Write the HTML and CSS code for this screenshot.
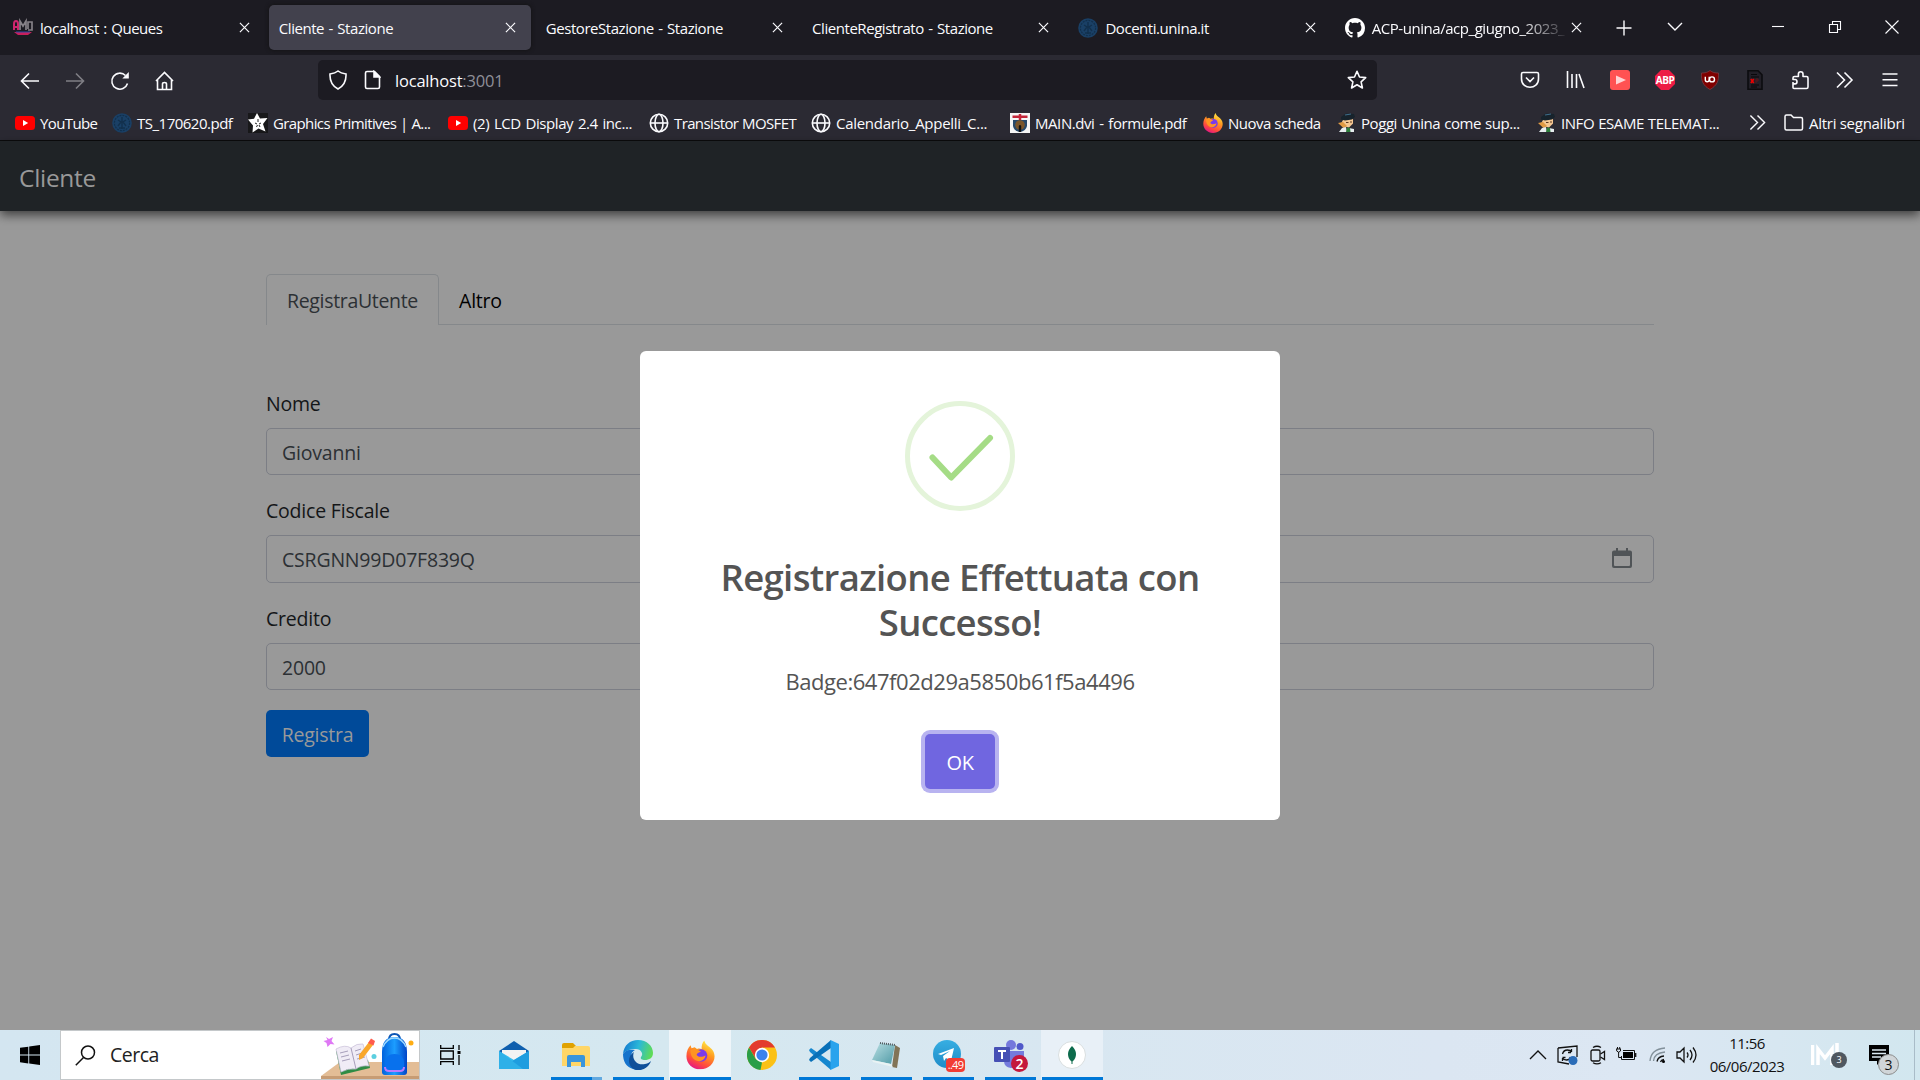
FILE: index.html
```
<!DOCTYPE html>
<html lang="it">
<head>
<meta charset="utf-8">
<title>Cliente - Stazione</title>
<link rel="stylesheet" href="styles.css">
</head>
<body>
<svg class="defs" width="0" height="0" aria-hidden="true">
  <defs>
    <linearGradient id="flame" x1="0.8" y1="0" x2="0.3" y2="1"><stop offset="0" stop-color="#fff44f"/><stop offset=".4" stop-color="#ff9a1f"/><stop offset=".75" stop-color="#ff4b3e"/><stop offset="1" stop-color="#e31587"/></linearGradient>
    <linearGradient id="edgeTop" x1="0" y1="0.3" x2="1" y2="0.5"><stop offset="0" stop-color="#1479d0"/><stop offset=".5" stop-color="#2ab8d8"/><stop offset="1" stop-color="#5fdc55"/></linearGradient>
    <linearGradient id="pack" x1="0" y1="0" x2="1" y2="0"><stop offset="0" stop-color="#0062dd"/><stop offset=".5" stop-color="#1c9dff"/><stop offset="1" stop-color="#0045c8"/></linearGradient>
    <linearGradient id="tg" x1="0" y1="0" x2="0" y2="1"><stop offset="0" stop-color="#37aee2"/><stop offset="1" stop-color="#1e8cc8"/></linearGradient>
    <linearGradient id="pad" x1="0" y1="0" x2="1" y2="1"><stop offset="0" stop-color="#b9dfe3"/><stop offset="1" stop-color="#4f9aa6"/></linearGradient>
  </defs>
  <symbol id="close" viewBox="0 0 12 12"><path d="M1 1l10 10M11 1L1 11" fill="none" stroke="currentColor" stroke-width="1.3"/></symbol>
  <symbol id="youtube" viewBox="0 0 20 20"><rect y="3" width="20" height="14" rx="3.5" fill="#f00"/><path d="M8 7l5.2 3L8 13z" fill="#fff"/></symbol>
  <symbol id="unina" viewBox="0 0 20 20"><circle cx="10" cy="10" r="9.8" fill="#1a4066"/><circle cx="10" cy="10" r="7.6" fill="none" stroke="#12304d" stroke-width="1.2" stroke-dasharray="2 1"/><path d="M10 4v12M6 7l3 2-3 4M14 7l-3 2 3 4M7 15h6" fill="none" stroke="#12304d" stroke-width="1.4"/></symbol>
  <symbol id="globe" viewBox="0 0 20 20"><g fill="none" stroke="#fbfbfe" stroke-width="1.6"><circle cx="10" cy="10" r="8.7"/><ellipse cx="10" cy="10" rx="4" ry="8.7"/><path d="M1.5 10h17"/></g></symbol>
  <symbol id="firefox" viewBox="0 0 20 20"><path d="M12.6 0c.5 2 1.3 2.6 2.6 3.8 2.8 2 4.5 4 4.5 7.1 0 5-4.200 9-9.700 9S.3 16 .3 10.800C.3 7.500 1.500 5 3.200 3.300l.6 2.100L6 4.700l1.600 1.100c1.300-.4 2.300-.3 3.200.2C10.600 3.600 11.300 1.500 12.600 0z" fill="url(#flame)"/><circle cx="10.400" cy="10.400" r="4.300" fill="#7a3bea"/><path d="M3 6.500c2.500-.8 5-.4 7.300 1.200-1.500.4-2.800 1-3 2.300 1.500 2 4.400 1.200 6.200.3-.6 3.700-4.600 4.900-7.300 3.200C4 12.100 2.900 9.300 3 6.500z" fill="#ff9422"/></symbol>
  <symbol id="student" viewBox="0 0 20 20"><path d="M6 7l10-1.500v5l-4 4-5-1-3-3z" fill="#f5c792"/><path d="M4 4l5-3.500L17 1l1 3-3 2.500-7 1-4-1z" fill="#17232c"/><path d="M8 2l6-1" stroke="#3f6f8c"/><path d="M1 10l5-1 4 4-3 2.500z" fill="#e09a45"/><path d="M2 19l3-4 4-1 1 5z" fill="#e8eef0"/><path d="M12 15l5 1v3h-4z" fill="#e8eef0"/><path d="M10 14.500l3 .5.5 4H9z" fill="#2d7f3b"/><path d="M9 9.500h2.500M13 9h2" stroke="#5a3820"/></symbol>
  <symbol id="more" viewBox="0 0 18 18"><path d="M1.500 1.500L9 9l-7.500 7.500M9 1.500L16.500 9 9 16.500" fill="none" stroke="#fbfbfe" stroke-width="1.500"/></symbol>
</svg>

<header class="tabs">
  <div class="tab">
    <svg class="fav" viewBox="0 0 20 20"><path d="M1 14h18l-4 3H5z" fill="#c81f5c"/><path d="M1 12V6q0-3 2-3t2 3v6M1 9h4" fill="none" stroke="#d0266e" stroke-width="2"/><path d="M7 12V3l3 5 3-5v9M15 11V4h4v8h-4" fill="none" stroke="#858187" stroke-width="1.700"/><path d="M3 14h14" stroke="#2e4aa7"/></svg>
    <span class="title">localhost : Queues</span><svg class="x"><use href="#close"/></svg>
  </div>
  <div class="tab active"><span class="title">Cliente - Stazione</span><svg class="x"><use href="#close"/></svg></div>
  <div class="tab"><span class="title">GestoreStazione - Stazione</span><svg class="x"><use href="#close"/></svg></div>
  <div class="tab"><span class="title">ClienteRegistrato - Stazione</span><svg class="x"><use href="#close"/></svg></div>
  <div class="tab"><svg class="fav"><use href="#unina"/></svg><span class="title">Docenti.unina.it</span><svg class="x"><use href="#close"/></svg></div>
  <div class="tab"><svg class="fav" viewBox="0 0 16 16"><path fill="#fff" d="M8 0C3.580 0 0 3.580 0 8c0 3.540 2.290 6.530 5.470 7.590.4.070.55-.17.55-.38 0-.19-.01-.82-.01-1.490-2.010.37-2.530-.49-2.690-.94-.09-.23-.48-.94-.82-1.130-.28-.15-.68-.52-.01-.53.63-.01 1.080.58 1.230.82.72 1.210 1.870.87 2.330.66.07-.52.28-.87.51-1.070-1.780-.2-3.640-.89-3.640-3.950 0-.87.31-1.590.82-2.150-.08-.2-.36-1.020.08-2.120 0 0 .67-.21 2.200.82.640-.18 1.320-.27 2-.27s1.360.09 2 .27c1.530-1.040 2.200-.82 2.200-.82.440 1.100.16 1.920.08 2.120.51.56.82 1.270.82 2.150 0 3.070-1.870 3.750-3.650 3.950.29.25.54.73.54 1.480 0 1.070-.01 1.930-.01 2.200 0 .21.15.46.55.38A8.010 8.010 0 0 0 16 8c0-4.420-3.580-8-8-8z"/></svg><span class="title fade">ACP-unina/acp_giugno_2023_</span><svg class="x"><use href="#close"/></svg></div>
  <div class="tabtools">
    <svg width="16" height="16" viewBox="0 0 16 16"><path d="M8 .5v15M.5 8h15"/></svg>
    <svg width="16" height="16" viewBox="0 0 16 16"><path d="M1 4l7 7 7-7"/></svg>
  </div>
  <div class="wincontrols">
    <svg width="14" height="14" viewBox="0 0 14 14"><path d="M1 6.500h12"/></svg>
    <svg width="14" height="14" viewBox="0 0 14 14"><path d="M1.500 4.500h8v8h-8zM4.500 4V1.500h8v8H10"/></svg>
    <svg width="14" height="14" viewBox="0 0 14 14"><path d="M.5 .5l13 13M13.500 .5l-13 13"/></svg>
  </div>
</header>

<div class="toolbar">
  <div class="nav">
    <svg viewBox="0 0 20 20"><path d="M19 10H2M9 2.500L1.500 10 9 17.500"/></svg>
    <svg class="dim" viewBox="0 0 20 20"><path d="M1 10h17M11 2.500l7.500 7.500-7.500 7.500"/></svg>
    <svg viewBox="0 0 20 20"><path d="M17.500 12.500A8 8 0 1 1 15.500 4.500"/><path d="M18.800 1v6.500h-6.500z" fill="#fbfbfe" stroke="none"/></svg>
    <svg viewBox="0 0 20 20"><path d="M1 10l8.500-8.500L18 10M2.500 8.500v10h14v-10M7.500 18v-5q0-1.500 2-1.500t2 1.500v5"/></svg>
  </div>
  <div class="urlbar">
    <svg width="20" height="20" viewBox="0 0 20 20"><path d="M10 1c2.500 2 5 2.500 8 3 .3 6-1.500 11.500-8 15C3.500 15.500 1.700 10 2 4c3-.5 5.500-1 8-3z"/></svg>
    <svg class="doc" width="17" height="20" viewBox="0 0 17 20"><path d="M3 1.500h7.500l5 5V17q0 1.500-1.500 1.500H3Q1.500 18.500 1.500 17V3Q1.500 1.500 3 1.500z"/><path d="M10 1.500v5.500h5.500z" fill="#fbfbfe"/></svg>
    <span class="url">localhost<span class="port">:3001</span></span>
    <svg class="star" width="20" height="20" viewBox="0 0 20 20"><path d="M10 1.300l2.500 5.700 6.200.6-4.600 4.200 1.300 6.200-5.400-3.200L4.600 18l1.300-6.200L1.300 7.600 7.500 7z" stroke-linejoin="round"/></svg>
  </div>
  <div class="exts">
    <svg viewBox="0 0 20 20"><path d="M3 2.500h14q1.500 0 1.500 1.500v5c0 11-17 11-17 0V4Q1.500 2.500 3 2.500zM6 7.500l4 4 4-4"/></svg>
    <svg viewBox="0 0 20 20"><path d="M2.500 1v17M7 4v14M11.500 4v14M14 4l5 14"/></svg>
    <svg viewBox="0 0 20 20"><rect width="20" height="20" rx="3" fill="#ff5252" stroke="none"/><path d="M6 5.500l10 4.500-10 4.500z" fill="#ffd4d4" stroke="none"/></svg>
    <span class="abp">ABP</span>
    <svg viewBox="0 0 20 20"><path d="M10 .5c2.500 2 5 2.500 8.500 2.500C19 11 17 15.500 10 19.500 3 15.500 1 11 1.500 3 5 3 7.500 2.500 10 .5z" fill="#800000" stroke="#7a3b42" stroke-width=".8"/><path d="M5.300 6.800v3q0 2 1.900 2T9.200 9.800V6.800" stroke="#fff" stroke-width="1.400"/><circle cx="12" cy="9.400" r="2.500" stroke="#fff" stroke-width="1.400"/></svg>
    <svg viewBox="0 0 20 20"><path d="M3 .8h10l4 4v14.400H3z" fill="#211f27" stroke="#0c0c0f"/><path d="M6 4.500h6M6 7h8M6 15h8M6 17h6" stroke="#09090b" stroke-width="1"/><path d="M5.800 9l3 4m0-4l-3 4" stroke="#e00"/><path d="M11 13V9h2v2h-2" stroke="#5b1820" stroke-width="1"/></svg>
    <svg viewBox="0 0 20 20"><path d="M3 12v5.500q0 1 1 1h12.500q1.500 0 1.500-1.500V8q0-1.500-1.500-1.500H13V4a2.300 2.300 0 0 0-4.600 0v2.500H4.500Q3 6.500 3 8v1.500h2q2 0 2 2.200t-2 2.200H3" stroke-linejoin="round"/></svg>
    <svg viewBox="0 0 20 20"><path d="M2 2.500L9.500 10 2 17.500M9.500 2.500L17 10l-7.500 7.500"/></svg>
    <svg viewBox="0 0 20 20"><path d="M2.500 4h15M2.500 9.800h15M2.500 15.500h15"/></svg>
  </div>
</div>

<nav class="bookmarks">
  <a><svg><use href="#youtube"/></svg><span class="tight">YouTube</span></a>
  <a><svg><use href="#unina"/></svg><span>TS_170620.pdf</span></a>
  <a><svg viewBox="0 0 20 20"><rect width="20" height="20" fill="#18181a"/><path d="M9 0l3 5.500 7.500-.5-4.500 6 2.500 7.500-7-3L4.500 19.500l.5-7L0 6.500l6-.7z" fill="#fff"/><path d="M10 6v3M7 10l2 1M13 10l-2 1M8.500 14l1-2M12 14l-1-2" stroke="#222"/></svg><span class="tight">Graphics Primitives | A...</span></a>
  <a><svg><use href="#youtube"/></svg><span class="airy">(2) LCD Display 2.4 inc...</span></a>
  <a><svg><use href="#globe"/></svg><span class="tight">Transistor MOSFET</span></a>
  <a><svg><use href="#globe"/></svg><span class="wide">Calendario_Appelli_C...</span></a>
  <a><svg viewBox="0 0 20 20"><rect width="20" height="20" fill="#f6f6f6"/><path d="M3 7h14v6q-1 5-7 6-6-1-7-6z" fill="#27496b"/><path d="M2.500 3.700h15M10 1v6" stroke="#c4263a" stroke-width="2.500"/><circle cx="10" cy="12" r="4.800" fill="#79552b"/><path d="M8.800 19v-6q1.200-2 2.400 0v6z" fill="#101010"/></svg><span class="airy">MAIN.dvi - formule.pdf</span></a>
  <a><svg><use href="#firefox"/></svg><span>Nuova scheda</span></a>
  <a><svg><use href="#student"/></svg><span class="pull">Poggi Unina come sup...</span></a>
  <a><svg><use href="#student"/></svg><span class="pull">INFO ESAME TELEMAT...</span></a>
  <a><svg class="chev"><use href="#more"/></svg></a>
  <a><svg viewBox="0 0 20 20"><path d="M2.500 2h4.500l2.500 2.500H17q1.500 0 1.500 1.500v9.500q0 1.500-1.500 1.500H2.500Q1 17 1 15.500v-12Q1 2 2.500 2z" fill="none" stroke="#fbfbfe" stroke-width="1.500"/></svg><span class="wide">Altri segnalibri</span></a>
</nav>

<main class="page">
  <div class="brandbar">Cliente</div>
  <div class="content">
    <ul class="navtabs"><li class="on">RegistraUtente</li><li>Altro</li></ul>
    <form class="form">
      <label>Nome</label>
      <div class="field">Giovanni</div>
      <label>Codice Fiscale</label>
      <div class="field cf"><span>CSRGNN99D07F839Q</span>
        <svg width="20" height="20" viewBox="0 0 20 20"><path d="M2 2.500h2V0h2v2.500h8V0h2v2.500h2q2 0 2 2V18q0 2-2 2H2q-2 0-2-2V4.500q0-2 2-2zM2 8v9q0 1 1 1h14q1 0 1-1V8z" fill="#505457"/></svg></div>
      <label>Credito</label>
      <div class="field">2000</div>
      <span class="btn">Registra</span>
    </form>
  </div>
  <section class="modal">
    <svg class="ok-icon" width="110" height="110" viewBox="0 0 110 110"><circle cx="55" cy="55" r="52.500" fill="none" stroke="#e4f4da" stroke-width="5"/><path d="M27.500 56.500l18.700 20L85 37" fill="none" stroke="#a5dc86" stroke-width="6" stroke-linecap="round" stroke-linejoin="round"/></svg>
    <h2>Registrazione Effettuata con<br>Successo!</h2>
    <p>Badge:647f02d29a5850b61f5a4496</p>
    <button class="confirm">OK</button>
  </section>
</main>

<footer class="taskbar">
  <div class="start"><svg width="20" height="20" viewBox="0 0 20 20"><path d="M0 2.800L8.300 1.700V9.600H0zM9.200 1.500L20 0v9.600H9.200zM0 10.500h8.300v7.900L0 17.200zM9.200 10.500H20V20L9.200 18.500z"/></svg></div>
  <div class="search">
    <svg width="21" height="21" viewBox="0 0 21 21"><circle cx="13" cy="7.500" r="6.500" fill="none" stroke="#111" stroke-width="1.500"/><path d="M8.500 12.500L.8 20.200" stroke="#111" stroke-width="1.500"/></svg>
    <span>Cerca</span>
    <svg class="art" width="98" height="48" viewBox="0 0 98 48">
      <path d="M0 45l19-14h79v14z" fill="#e3bd96"/><path d="M0 45h98v3H0z" fill="#c79c74"/>
      <path d="M5 6l3 2 4-2-1.500 4 3 3.500-4-.5-3 3-1-4-3-2 4-1z" fill="#df78f5"/>
      <circle cx="53" cy="25.500" r="2.500" fill="#5ccfe0"/><circle cx="90" cy="12" r="2.500" fill="#ffad13"/>
      <path d="M15 20l5 24 29-7-2-8z" fill="#2f8c44"/><path d="M15 18q9-5 15-1 6-5 12-4l6 22q-8-1-13 3-8-1-15 3z" fill="#f0ecf6" stroke="#c9bfd9" stroke-width=".7"/><path d="M30 17l5 21M19 22l8-2M20 26l8-2M21 30l8-2M34 20l6-2M35 24l6-2M36 28l8-2" stroke="#a79fbb" fill="none"/>
      <path d="M38 24L48 11l4 3-10 13-4 2z" fill="#f9a72b"/><path d="M47 12l3-4.500 4 2.500-1.500 4.500z" fill="#ff5b4c"/>
      <path d="M68 9q0-6 5.500-6T79 9" fill="none" stroke="#0b55b5" stroke-width="2"/><path d="M61 21Q61 6 73.500 6T86 21v20q0 3-3 3H64q-3 0-3-3z" fill="url(#pack)"/><path d="M62 16q4-9 11.500-9T85 16" fill="none" stroke="#9bd9ff" stroke-width="1.500"/><path d="M64 39V31q1-8 9.500-8t9.500 8v8q-9 3-19 0z" fill="#0871ed"/><path d="M64 36q0 4 4 4h11q4 0 4-4" fill="none" stroke="#b77bff" stroke-width="2"/>
    </svg>
  </div>
  <div class="tview"><svg width="21" height="20" viewBox="0 0 21 20"><path d="M.7 0v3.300h12.600V0M.7 20v-3.300h12.600V20M.7 6h12.600v8H.7zM19 0v5M19 10v10" fill="none" stroke="#000" stroke-width="1.300"/><path d="M17.500 6h3v3h-3z"/></svg></div>
  <div class="apps">
    <div class="app"><svg width="30" height="30" viewBox="0 0 30 30"><path d="M0 11L15 1l15 10v17H0z" fill="#0f5fae"/><path d="M3 10h24v8L15 23 3 15z" fill="#f3f3f3"/><path d="M0 11l15 9L30 11v18H0z" fill="#36bdf0"/><path d="M0 29L30 11v18z" fill="#1f9ddf"/><path d="M0 11l24 18H0z" fill="#2eb0e8"/></svg></div>
    <div class="app run folder"><svg width="28" height="24" viewBox="0 0 28 24"><path d="M0 2q0-2 2-2h9l3 3v5H0z" fill="#e0a100"/><path d="M0 5h11l2-2h13q2 0 2 2v18H0z" fill="#ffd667"/><path d="M5 24V14q0-2 2-2h14q2 0 2 2v10h-4v-5H9v5z" fill="#3a95db"/></svg></div>
    <div class="app run"><svg width="30" height="30" viewBox="0 0 30 30"><path d="M0 14C1 5 7 0 15 0c9 0 15 6 15 13 0 5-4 7-8 7-3 0-5-1-4-3 3-3 0-8-5-8C7 9 2 11 0 14z" fill="url(#edgeTop)"/><path d="M0 14c2-4 7-5 12-4-4 2-5 7-3 11 3 6 10 7 16 4-4 5-10 6-15 4C3 27 0 21 0 14z" fill="#1673cc"/><path d="M11 12c-3 7 3 14 11 12 3-.5 5-2 6-3-2 6-8 10-15 9C4 27 4 16 11 12z" fill="#0f4f99"/></svg></div>
    <div class="app run lit"><svg width="29" height="30" viewBox="0 0 20 20"><use href="#firefox"/></svg></div>
    <div class="app"><svg width="30" height="30" viewBox="0 0 30 30"><circle cx="15" cy="15" r="15" fill="#fbc116"/><path d="M2 7.500A15 15 0 0 1 28 7.500H15L9 19z" fill="#e33b2e"/><path d="M2 7.500L8.700 19l6.300 3.500L13.500 30A15 15 0 0 1 2 7.500z" fill="#2a9e48"/><circle cx="15" cy="15" r="7.200" fill="#fff"/><circle cx="15" cy="15" r="5.600" fill="#3b82ed"/></svg></div>
    <div class="app run"><svg width="30" height="30" viewBox="0 0 30 30"><path d="M0 10l2-2 20 14v8L1 12z" fill="#1587cf"/><path d="M0 20l2 2L22 8V0L1 18z" fill="#0870b8"/><path d="M21.500 0L30 4v22l-8.500 4z" fill="#29a3ed"/></svg></div>
    <div class="app run"><svg width="30" height="28" viewBox="0 0 30 28"><path d="M24 4l5 3-3 20-5-1z" fill="#827457"/><path d="M9 2l15 2-4 19-19-4z" fill="url(#pad)"/><path d="M1 19l19 4 2 3L2 21z" fill="#e9f3f4"/><path d="M9 2l15 2" stroke="#525b60" stroke-width="2" stroke-dasharray="1 1"/></svg></div>
    <div class="app run"><svg width="30" height="32" viewBox="0 0 30 32"><circle cx="14" cy="15" r="14" fill="url(#tg)"/><path d="M5 15l16-6-3 13-5-3-2 3-1-5 7-5-9 4z" fill="#fff"/></svg><span class="count tgc">..49</span></div>
    <div class="app run"><svg width="32" height="30" viewBox="0 0 32 30"><circle cx="17" cy="5" r="5" fill="#7478dc"/><circle cx="26" cy="6.500" r="3.500" fill="#5059c9"/><path d="M10 11h15v10q0 7-8 7-7-1-7-7zM25 11h5v9q-1 5-5 4z" fill="#747bdd"/><rect y="7" width="16" height="15" rx="1" fill="#4650b5"/><path d="M4 11h8M8 11v8" stroke="#fff" stroke-width="2"/></svg><span class="count tmc">2</span></div>
    <div class="app run lit2"><svg width="28" height="28" viewBox="0 0 28 28"><circle cx="14" cy="14" r="13.500" fill="#fff" stroke="#d9dedf"/><path d="M14 5q4 4 4 8 0 5-3.500 7.500V23h-1v-2.500Q10 18 10 13q0-4 4-8z" fill="#0d6b4c"/></svg></div>
  </div>
  <div class="tray">
    <svg class="t1" width="18" height="20" viewBox="0 0 18 20"><path d="M1 14l8-8 8 8"/></svg>
    <svg class="t2" width="22" height="20" viewBox="0 0 22 20"><path d="M1 3l19-2v11M1 3v14l11 2M5.500 9q1-4 5-4 3 0 4 2V4M14 7.500h-3M13.500 12q-1 3-4 3-3 0-4-2v3M5.500 12.500h3"/><circle cx="16" cy="15.500" r="4.500" fill="#2a6cb8" stroke="none"/></svg>
    <svg class="t3" width="16" height="20" viewBox="0 0 16 20"><rect x="1" y="5" width="9" height="11" rx="1.500"/><path d="M10.500 9l4-2.500v8l-4-2.500M3 2.500Q7 0 11 2.500M3 17.700Q7 20 11 17.700"/></svg>
    <svg class="t4" width="21" height="20" viewBox="0 0 21 20"><path d="M7 5.500h11.500v9h-13V11" stroke-width="1"/><path d="M7 7h10v6H7z" fill="#000" stroke="none"/><path d="M19.700 8v4" /><path d="M0 4h5M1.500 2v2M3.700 2v2M.7 4v2q2 2.500 3.800 0V4M2.600 7v5.500H5" stroke-width="1"/></svg>
    <svg class="t5" width="17" height="20" viewBox="0 0 17 20"><g stroke="#82909a"><path d="M1 16Q2 4 16 3M4.500 16Q5 8 16 7"/></g><path d="M8 16.500q1-5 7-5.500M11.500 17q.5-2 3.500-2.500"/><circle cx="14.500" cy="16.500" r="1.500" fill="#000" stroke="none"/></svg>
    <svg class="t6" width="21" height="20" viewBox="0 0 21 20"><path d="M1 7h3l4-4v14l-4-4H1zM11 7.500q2 2.500 0 5M14 5q4 5 0 10M17 2.500q6 7.500 0 15"/></svg>
    <div class="clock"><span>11:56</span><span>06/06/2023</span></div>
    <div class="mm"><svg width="30" height="24" viewBox="0 0 30 24"><path d="M1.500 2v20M7 22V6l7 9 7-9v16M26 0v22" fill="none" stroke="#fff" stroke-width="3.500"/></svg><span>3</span></div>
    <div class="notif"><svg width="20" height="20" viewBox="0 0 20 20"><path d="M0 0h20v16h-8l-4 4v-4H0z" fill="#000" stroke="none"/><path d="M3 5h14M3 8.500h14M3 12h9" stroke="#dce9f1"/></svg><span>3</span></div>
  </div>
</footer>
</body>
</html>
```
FILE: styles.css
```
* { box-sizing: border-box; }
body { margin: 0; width: 1920px; height: 1080px; overflow: hidden; display: flex; flex-direction: column; font-family: "Open Sans", "Noto Sans", sans-serif; background: #999; }
.defs { position: absolute; }
svg { flex: none; display: block; }

/* Tab strip */
.tabs { height: 55px; background: #1c1b22; display: flex; align-items: center; padding-left: 3px; color: #fbfbfe; }
.tab { width: 266.300px; height: 55px; display: flex; align-items: center; padding: 0 15px 0 10px; gap: 6px; font-size: 15px; letter-spacing: -0.450px; word-spacing: 1px; }
.tab .title { flex: 1; white-space: nowrap; overflow: hidden; line-height: 24px; padding-top: 1px; }
.tab .x { width: 11px; height: 11px; margin-right: 4px; }
.tab.active { width: 262px; height: 45px; margin: 0 5px 0 -.5px; background: #42414d; border-radius: 5px; box-shadow: 0 0 4px #111; padding-right: 11px; }
.tab .fav + .title { padding-left: 1px; }
.title.fade { mask-image: linear-gradient(90deg, #000 150px, transparent 198px); }
.tabtools { display: flex; gap: 35px; margin-left: 15px; }
.tabtools svg, .wincontrols svg { fill: none; stroke: #fbfbfe; stroke-width: 1.400; }
.tabtools svg:last-child { margin-top: -1px; }
.wincontrols { display: flex; gap: 43px; margin-left: auto; margin-right: 21px; margin-top: -1px; }
.wincontrols svg { stroke-width: 1.100; }
.fav { width: 20px; height: 20px; }

/* Toolbar */
.toolbar { height: 52px; background: #2b2a33; display: flex; align-items: center; }
.toolbar svg { fill: none; stroke: #fbfbfe; stroke-width: 1.600; }
.nav { width: 318px; display: flex; gap: 25px; padding-left: 20px; }
.nav svg { width: 20px; height: 20px; }
.toolbar .dim { opacity: .4; }
.urlbar { width: 1059px; height: 40px; margin-top: -2px; border-radius: 5px; background: #1c1b22; display: flex; align-items: center; padding: 0 10px; color: #fbfbfe; }
.doc { margin-left: 16px; }
.url { margin-left: 14px; font-size: 16.500px; letter-spacing: -0.200px; line-height: 26px; padding-top: 2px; }
.port { color: #8f8f98; }
.star { margin-left: auto; }
.exts { display: flex; gap: 25px; margin: -2px 0 0 143px; }
.exts svg { width: 20px; height: 20px; }
.abp { width: 20px; height: 20px; background: #ed1c45; clip-path: polygon(30% 0, 70% 0, 100% 30%, 100% 70%, 70% 100%, 30% 100%, 0 70%, 0 30%); color: #fff; font-size: 10px; font-weight: 700; line-height: 20px; text-align: center; letter-spacing: -.5px; }

/* Bookmarks */
.bookmarks { height: 34px; background: #2b2a33; border-bottom: 1px solid #0c0c0d; display: grid; grid-template-columns: 97px 136px 200px 201px 162px 199px 193px 134px 200px 212px 35px 121px; padding-left: 15px; align-items: center; color: #fbfbfe; font-size: 15px; letter-spacing: -0.500px; }
.bookmarks a { display: flex; align-items: center; gap: 5px; white-space: nowrap; padding-bottom: 2px; }
.bookmarks svg { width: 20px; height: 20px; }
.bookmarks .chev { width: 17px; height: 17px; }
.bookmarks span { line-height: 22px; padding-top: 1px; }
.bookmarks .tight { letter-spacing: -0.620px; word-spacing: .5px; }
.bookmarks .airy { letter-spacing: -0.430px; word-spacing: 1.300px; }
.bookmarks .wide { letter-spacing: -0.280px; }
.bookmarks .pull { margin-left: -1px; letter-spacing: -0.430px; word-spacing: .5px; }

/* Page */
.page { height: 889px; display: flex; flex-direction: column; align-items: center; background: #999; color: #141618; position: relative; }
.brandbar { width: 1920px; height: 70px; background: #1f2326; color: #999; font-size: 24.500px; line-height: 74px; padding-left: 19px; letter-spacing: -0.300px; box-shadow: 0 4px 10px rgba(0,0,0,.6); }
.content { width: 1388px; padding-top: 63px; font-size: 19.500px; }
.navtabs { list-style: none; margin: 0; padding: 0; display: flex; height: 51px; border-bottom: 1px solid #85888b; color: #000; }
.navtabs li { height: 51px; padding: 0 20px; line-height: 53px; letter-spacing: -.2px; }
.navtabs .on { width: 173px; background: #999; color: #2c3034; border: 1px solid #85888b; border-bottom: 0; border-radius: 5px 5px 0 0; line-height: 51px; letter-spacing: -.33px; }
.form { display: flex; flex-direction: column; align-items: flex-start; padding-top: 62px; }
.form label { height: 41px; line-height: 34px; letter-spacing: -.2px; }
.field { width: 1388px; height: 47px; border: 1px solid #7c7e85; border-radius: 5px; padding: 0 15px; line-height: 48px; color: #2c3034; margin-bottom: 19px; letter-spacing: -.2px; }
.cf { height: 48px; display: flex; justify-content: space-between; padding-right: 21px; }
.cf svg { margin-top: 12px; }
.btn { width: 103px; height: 47px; margin-top: 1px; border-radius: 5px; background: #004a99; color: #999; line-height: 49px; text-align: center; letter-spacing: -.25px; }

.modal { position: absolute; left: 640px; top: 210px; width: 640px; height: 469px; background: #fff; border-radius: 6px; color: #545454; display: flex; flex-direction: column; align-items: center; }
.ok-icon { margin-top: 50px; }
.modal h2 { margin: 44px 0 0; font-size: 36.500px; line-height: 45px; font-weight: 600; text-align: center; letter-spacing: -.65px; }
.modal p { margin: 19px 0 0; font-size: 22px; line-height: 34px; letter-spacing: -.45px; }
.confirm { width: 70px; height: 55px; margin-top: 36px; flex: none; border: 0; border-radius: 5px; background: #7066e0; box-shadow: 0 0 0 4px #b8b3f0; color: #fff; font: 20px "Open Sans", sans-serif; letter-spacing: -.5px; padding: 2px 0 0; }

/* Taskbar */
.taskbar { height: 50px; background: linear-gradient(90deg, #d4e6f1, #d5e8f0 35%, #dbe6f2 75%, #dce7f3 85%, #d2e7ef); display: flex; }
.start { width: 60px; padding: 15px 20px; }
.search { width: 360px; background: #fff; border: 1px solid #c4c8ca; display: flex; align-items: center; padding-left: 14px; font-size: 19.500px; letter-spacing: -.5px; color: #222; }
.search span { margin-left: 14px; line-height: 48px; }
.art { margin-left: auto; }
.tview { width: 63px; padding: 15px 0 0 20px; }
.apps { display: flex; }
.app { width: 62px; height: 50px; display: flex; align-items: center; justify-content: center; position: relative; }
.run { background: linear-gradient(#0078d7, #0078d7) 50% 100% / 51px 3px no-repeat; }
.folder { background: linear-gradient(90deg, #0078d7 80%, #62a9e0 80%) 50% 100% / 51px 3px no-repeat; }
.lit { background: linear-gradient(#0078d7, #0078d7) 50% 100% / 61px 3px no-repeat, #eff5f9; }
.lit2 { background: linear-gradient(#0078d7, #0078d7) 50% 100% / 61px 3px no-repeat, #e8f0f7; }
.count { position: absolute; color: #fff; text-align: center; }
.tgc { right: 14px; top: 28px; width: 19px; height: 14px; border-radius: 4px; background: #f23c34; font-size: 11px; line-height: 14px; letter-spacing: -.7px; }
.tmc { left: 32px; top: 25px; width: 17px; height: 17px; border-radius: 9px; background: #c4183c; font-size: 14px; line-height: 17px; font-weight: 600; }
.tray { margin-left: auto; display: flex; align-items: center; padding-right: 5px; }
.tray > svg, .mm > svg, .notif > svg { fill: none; stroke: #111; stroke-width: 1.300; }
.tray .t2 { margin-left: 10px; }
.tray .t3 { margin-left: 11px; }
.tray .t4 { margin-left: 10px; }
.tray .t5 { margin-left: 12px; }
.tray .t6 { margin-left: 10px; }
.clock { width: 76px; margin-left: 12px; display: flex; flex-direction: column; align-items: center; font-size: 15px; line-height: 23px; letter-spacing: -.5px; color: #111; }
.mm { margin-left: 26px; width: 36px; position: relative; }
.mm span { position: absolute; left: 20px; top: 9px; width: 16px; height: 16px; border-radius: 8px; background: #505860; color: #fff; font-size: 9px; line-height: 16px; text-align: center; }
.notif { margin-left: 22px; width: 46px; height: 50px; padding-top: 15px; border-right: 1px solid #a9bcc8; position: relative; }
.notif span { position: absolute; left: 9px; top: 24px; width: 21px; height: 21px; border-radius: 11px; border: 1px solid #8c8c8c; background: #d0d5d8; color: #111; font-size: 14px; line-height: 19px; text-align: center; }
```
